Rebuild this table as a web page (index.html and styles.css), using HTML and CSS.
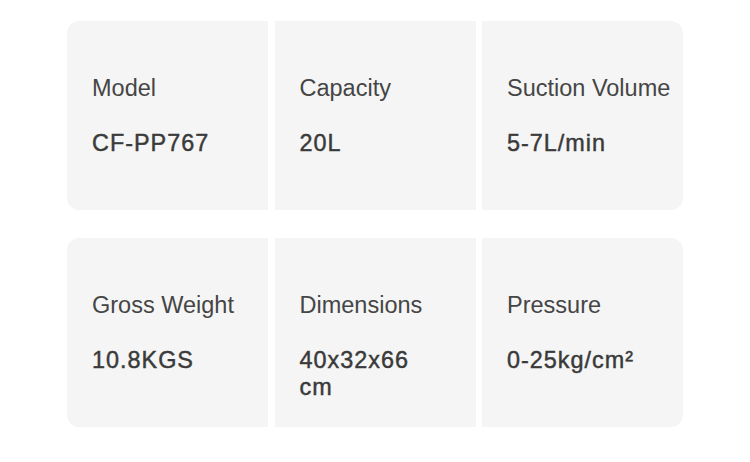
FILE: index.html
```html
<!DOCTYPE html>
<html>
<head>
<meta charset="utf-8">
<link rel="stylesheet" href="styles.css">
</head>
<body>
<div class="specs">
  <div class="row">
    <div class="card"><div class="label">Model</div><div class="value">CF-PP767</div></div>
    <div class="card"><div class="label">Capacity</div><div class="value">20L</div></div>
    <div class="card"><div class="label">Suction Volume</div><div class="value">5-7L/min</div></div>
  </div>
  <div class="row">
    <div class="card"><div class="label">Gross Weight</div><div class="value">10.8KGS</div></div>
    <div class="card"><div class="label">Dimensions</div><div class="value">40x32x66 cm</div></div>
    <div class="card"><div class="label">Pressure</div><div class="value">0-25kg/cm²</div></div>
  </div>
</div>
</body>
</html>
```
FILE: styles.css
```css
html, body {
  margin: 0;
  padding: 0;
  background: #ffffff;
}
body {
  font-family: "Liberation Sans", Arial, sans-serif;
}
.specs {
  width: 616px;
  margin: 0 auto;
  padding-top: 21px;
  display: flex;
  flex-direction: column;
  gap: 28px;
}
.row {
  display: grid;
  grid-template-columns: 201px 201px 201px;
  column-gap: 6.5px;
  height: 189px;
}
.card {
  background: #f5f5f5;
  padding: 54px 10px 0 25px;
  box-sizing: border-box;
}
.card:first-child {
  border-radius: 12px 0 0 12px;
}
.card:last-child {
  border-radius: 0 12px 12px 0;
}
.label {
  font-size: 23.5px;
  line-height: 27px;
  color: #454545;
  white-space: nowrap;
}
.value {
  margin-top: 28px;
  font-size: 23.4px;
  line-height: 27px;
  font-weight: normal;
  color: #3a3a3a;
  -webkit-text-stroke: 0.45px #3a3a3a;
  letter-spacing: 1px;
  max-width: 140px;
}
```
